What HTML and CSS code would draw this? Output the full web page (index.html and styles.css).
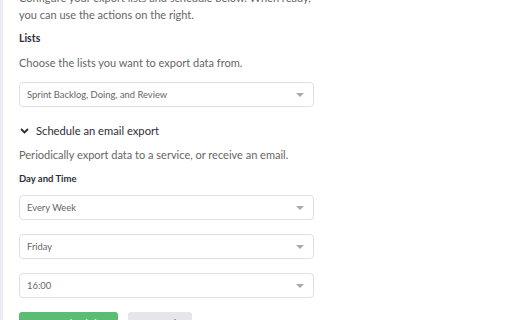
FILE: index.html
```html
<!DOCTYPE html>
<html>

<head lang="en">
    <meta charset="UTF-8">
    <title>Export</title>
    <link rel="stylesheet" href="styles.css">
</head>

<body>
    <div class="panel">
        <div class="content">
            <p class="intro">Configure your export lists and schedule below. When ready,<br>you can use the actions on the right.</p>

            <h3 class="label">Lists</h3>
            <p class="desc">Choose the lists you want to export data from.</p>
            <div class="select first">
                <span>Sprint Backlog, Doing, and Review</span>
                <i class="caret"></i>
            </div>

            <div class="toggle">
                <svg class="chev" width="9" height="6" viewBox="0 0 9 6">
                    <path d="M1 1 L4.5 4.5 L8 1" fill="none" stroke="#2e2e38" stroke-width="1.8" />
                </svg>
                <span>Schedule an email export</span>
            </div>
            <p class="desc tight">Periodically export data to a service, or receive an email.</p>

            <h4 class="small-label">Day and Time</h4>
            <div class="select">
                <span>Every Week</span>
                <i class="caret"></i>
            </div>
            <div class="select">
                <span>Friday</span>
                <i class="caret"></i>
            </div>
            <div class="select">
                <span>16:00</span>
                <i class="caret"></i>
            </div>

            <div class="actions">
                <a href="#" class="btn primary">Save schedule</a>
                <a href="#" class="btn">Cancel</a>
            </div>
        </div>
    </div>
</body>

</html>
```

FILE: styles.css
```css
/*reset*/
body,
h3,
h4,
p {
    margin: 0;
    padding: 0;
}

body {
    font: 11px/20px Lato, "Open Sans", sans-serif;
    color: #666;
    background: #fff;
    overflow: hidden;
}

a {
    text-decoration: none;
}

.panel {
    border-left: 3px solid #ebebf3;
    height: 320px;
    overflow: hidden;
}

.content {
    width: 295px;
    padding-left: 16px;
    margin-top: -11px;
}

.intro {
    white-space: nowrap;
    line-height: 17px;
}

.label {
    font-size: 10.5px;
    font-weight: 700;
    line-height: 18px;
    color: #2e2e38;
    margin-top: 6px;
}

.desc {
    margin-top: 6px;
}

.desc.tight {
    margin-top: 4px;
}

.select {
    height: 23px;
    border: 1px solid #e0e0e4;
    border-radius: 4px;
    margin-top: 14px;
    display: flex;
    align-items: center;
    justify-content: space-between;
    padding: 0 9px 0 7px;
    font-size: 9.4px;
    color: #666;
}

.select.first {
    margin-top: 9px;
}

.small-label + .select {
    margin-top: 8px;
}

.caret {
    width: 0;
    height: 0;
    border-left: 4px solid transparent;
    border-right: 4px solid transparent;
    border-top: 4px solid #a8a8ae;
}

.toggle {
    margin-top: 14px;
    display: flex;
    align-items: center;
    color: #2e2e38;
    font-size: 11.2px;
}

.chev {
    margin: 0 7px 0 1px;
}

.small-label {
    font-size: 9.5px;
    font-weight: 700;
    line-height: 16px;
    color: #2e2e38;
    margin-top: 6px;
}

.actions {
    margin-top: 14px;
    display: flex;
    gap: 10px;
}

.btn {
    display: block;
    height: 24px;
    line-height: 24px;
    padding-bottom: 8px;
    border-radius: 3px;
    background: #e6e6ea;
    color: #666;
    font-size: 11px;
    text-align: center;
}

.btn.primary {
    width: 99px;
    background: #5bbc74;
    color: #fff;
}

.btn + .btn {
    width: 64px;
}
```
